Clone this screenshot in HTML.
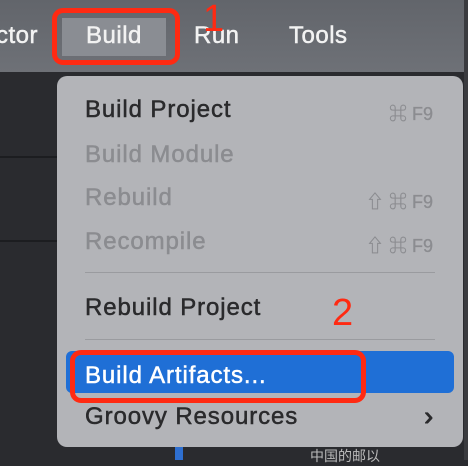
<!DOCTYPE html><html><head><style>
*{margin:0;padding:0;box-sizing:border-box}
body{width:468px;height:460px;overflow:hidden;background:#2a2b2f;font-family:"Liberation Sans","Noto Sans CJK SC",sans-serif;position:relative}
.bar{position:absolute;left:0;top:0;width:464px;height:72px;background:linear-gradient(#62656b,#6e7177)}
.rs{position:absolute;left:464px;top:0;width:4px;height:460px;background:#3a3b3f}
.bar span{position:absolute;top:22px;font-size:24px;color:#f2f2f2;-webkit-text-stroke:0.5px #f2f2f2;letter-spacing:0.5px}
.hl1{position:absolute;left:62px;top:18px;width:104px;height:38px;background:#8a8d93}
.ln{position:absolute;left:0;width:57px;height:2px;background:#1c1d20}
.menu{position:absolute;left:57px;top:76px;width:406px;height:371px;background:#b3b4b8;border-radius:10px}
.it{position:absolute;left:28px;font-size:24px;color:#2a2a2c;letter-spacing:0.9px;-webkit-text-stroke:0.5px currentColor}
.dis{color:#8b8c90}
.sc{position:absolute;right:30px;font-size:18px;color:#8b8c90;-webkit-text-stroke:0.3px currentColor}
.sep{position:absolute;left:28px;right:28px;height:1px;background:#9a9b9f}
.sel{position:absolute;left:9px;right:9px;top:275px;height:42px;background:#1f6fd6;border-radius:6px}
.red{position:absolute;border:5px solid #ff2a12;border-radius:11px}
.num{position:absolute;color:#ff2a12;font-size:36px}
</style></head><body>
<div class="bar">
<div class="hl1"></div>
<span style="left:-4px">ctor</span>
<span style="left:86px">Build</span>
<span style="left:194px">Run</span>
<span style="left:289px">Tools</span>
</div>
<div class="rs"></div>
<div class="ln" style="top:156px"></div>
<div class="ln" style="top:240px"></div>
<div style="position:absolute;left:175px;top:447px;width:8px;height:13px;background:#2e6fd0"></div>
<div style="position:absolute;left:310px;top:446px;font-size:14px;color:#bbb">中国的邮以</div>
<div class="menu">
<div class="it" style="top:20px">Build Project</div><div class="sc" style="top:24px">⌘ F9</div>
<div class="it dis" style="top:65px">Build Module</div>
<div class="it dis" style="top:108px">Rebuild</div><div class="sc" style="top:112px">⇧ ⌘ F9</div>
<div class="it dis" style="top:152px">Recompile</div><div class="sc" style="top:156px">⇧ ⌘ F9</div>
<div class="sep" style="top:196px"></div>
<div class="it" style="top:218px">Rebuild Project</div>
<div class="sep" style="top:263px"></div>
<div class="sel"></div>
<div class="it" style="top:286px;color:#fff">Build Artifacts...</div>
<div class="it" style="top:327px">Groovy Resources</div><div class="sc" style="top:325px;color:#2a2a2c;font-size:26px;-webkit-text-stroke:1px #2a2a2c">›</div>
</div>
<div class="red" style="left:52px;top:8px;width:128px;height:57px"></div>
<div class="num" style="left:203px;top:-2px;font-size:38px">1</div>
<div class="red" style="left:70px;top:350px;width:296px;height:53px"></div>
<div class="num" style="left:332px;top:292px;font-size:38px">2</div>
</body></html>
